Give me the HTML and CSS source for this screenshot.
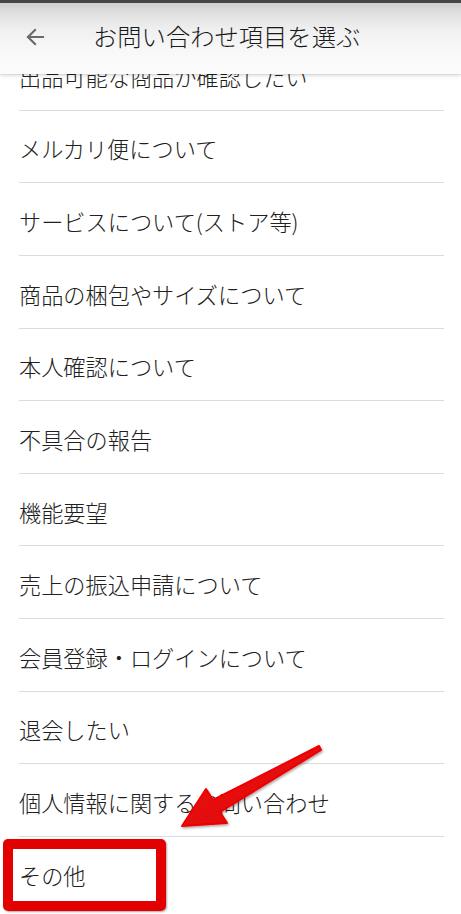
FILE: index.html
```html
<!DOCTYPE html>
<html lang="ja">
<head>
<meta charset="utf-8">
<link rel="stylesheet" href="styles.css">
</head>
<body>
<div class="screen">
  <ul class="list">
    <li class="row">出品可能な商品か確認したい</li>
    <li class="row">メルカリ便について</li>
    <li class="row">サービスについて(ストア等)</li>
    <li class="row">商品の梱包やサイズについて</li>
    <li class="row">本人確認について</li>
    <li class="row">不具合の報告</li>
    <li class="row">機能要望</li>
    <li class="row">売上の振込申請について</li>
    <li class="row">会員登録・ログインについて</li>
    <li class="row">退会したい</li>
    <li class="row">個人情報に関するお問い合わせ</li>
    <li class="row row-last">その他</li>
  </ul>
  <header class="appbar">
    <div class="statusline"></div>
    <div class="bar">
      <svg class="back" width="24" height="24" viewBox="0 0 24 24">
        <path d="M20 12H5M12 5l-7 7 7 7" fill="none" stroke="#6b6b6b" stroke-width="2.2" stroke-linecap="square"/>
      </svg>
      <h1 class="title">お問い合わせ項目を選ぶ</h1>
    </div>
  </header>
  <div class="highlight"></div>
  <svg class="pointer" width="461" height="914" viewBox="0 0 461 914">
    <defs>
      <linearGradient id="ag" x1="0" y1="0" x2="1" y2="1">
        <stop offset="0" stop-color="#f21818"/>
        <stop offset="1" stop-color="#d80000"/>
      </linearGradient>
      <filter id="sh" x="-10%" y="-10%" width="130%" height="130%">
        <feDropShadow dx="1" dy="1.5" stdDeviation="1" flood-color="#000" flood-opacity="0.35"/>
      </filter>
    </defs>
    <polygon points="319,746 213,800 206,789 182,826 227,823 220,812 321,750" fill="url(#ag)" stroke="#e00" stroke-width="2" stroke-linejoin="round" filter="url(#sh)"/>
  </svg>
</div>
</body>
</html>
```
FILE: styles.css
```css
html, body {
  margin: 0;
  padding: 0;
  background: #fff;
}
.screen {
  position: relative;
  width: 461px;
  height: 914px;
  overflow: hidden;
  background: #fff;
  font-family: "Noto Sans CJK JP", "Noto Sans", sans-serif;
  color: #222;
}
.list {
  list-style: none;
  margin: 0;
  padding: 38px 17px 0 19px;
}
.row {
  height: 72.65px;
  border-bottom: 1px solid #dcdcdc;
  display: flex;
  align-items: center;
  padding-top: 4px;
  box-sizing: border-box;
  font-size: 22.2px;
  font-weight: 300;
  line-height: 1;
  color: #202020;
  white-space: nowrap;
}
.row-last {
  border-bottom: none;
}
.appbar {
  position: absolute;
  top: 0;
  left: 0;
  right: 0;
  height: 74px;
  background: linear-gradient(to bottom, #c9c9c9 0px, #dedede 12px, #f0f0f0 30px, #f8f8f8 50px, #fbfbfb 74px);
  box-shadow: 0 2px 4px rgba(0,0,0,0.12), 0 1px 1px rgba(0,0,0,0.06);
}
.statusline {
  height: 3px;
  background: #454545;
}
.bar {
  display: flex;
  align-items: center;
  height: 71px;
  padding-left: 23px;
  padding-bottom: 4px;
  box-sizing: border-box;
}
.back {
  flex: none;
  display: block;
}
.title {
  margin: 0 0 0 46px;
  font-size: 24.3px;
  font-weight: 300;
  line-height: 1;
  color: #1a1a1a;
  white-space: nowrap;
}
.highlight {
  position: absolute;
  left: 3px;
  top: 839px;
  width: 143px;
  height: 52px;
  border: 10px solid #e30000;
  border-radius: 5px;
  box-shadow: 1px 1px 2px rgba(0,0,0,0.35);
}
.pointer {
  position: absolute;
  left: 0;
  top: 0;
}
```
